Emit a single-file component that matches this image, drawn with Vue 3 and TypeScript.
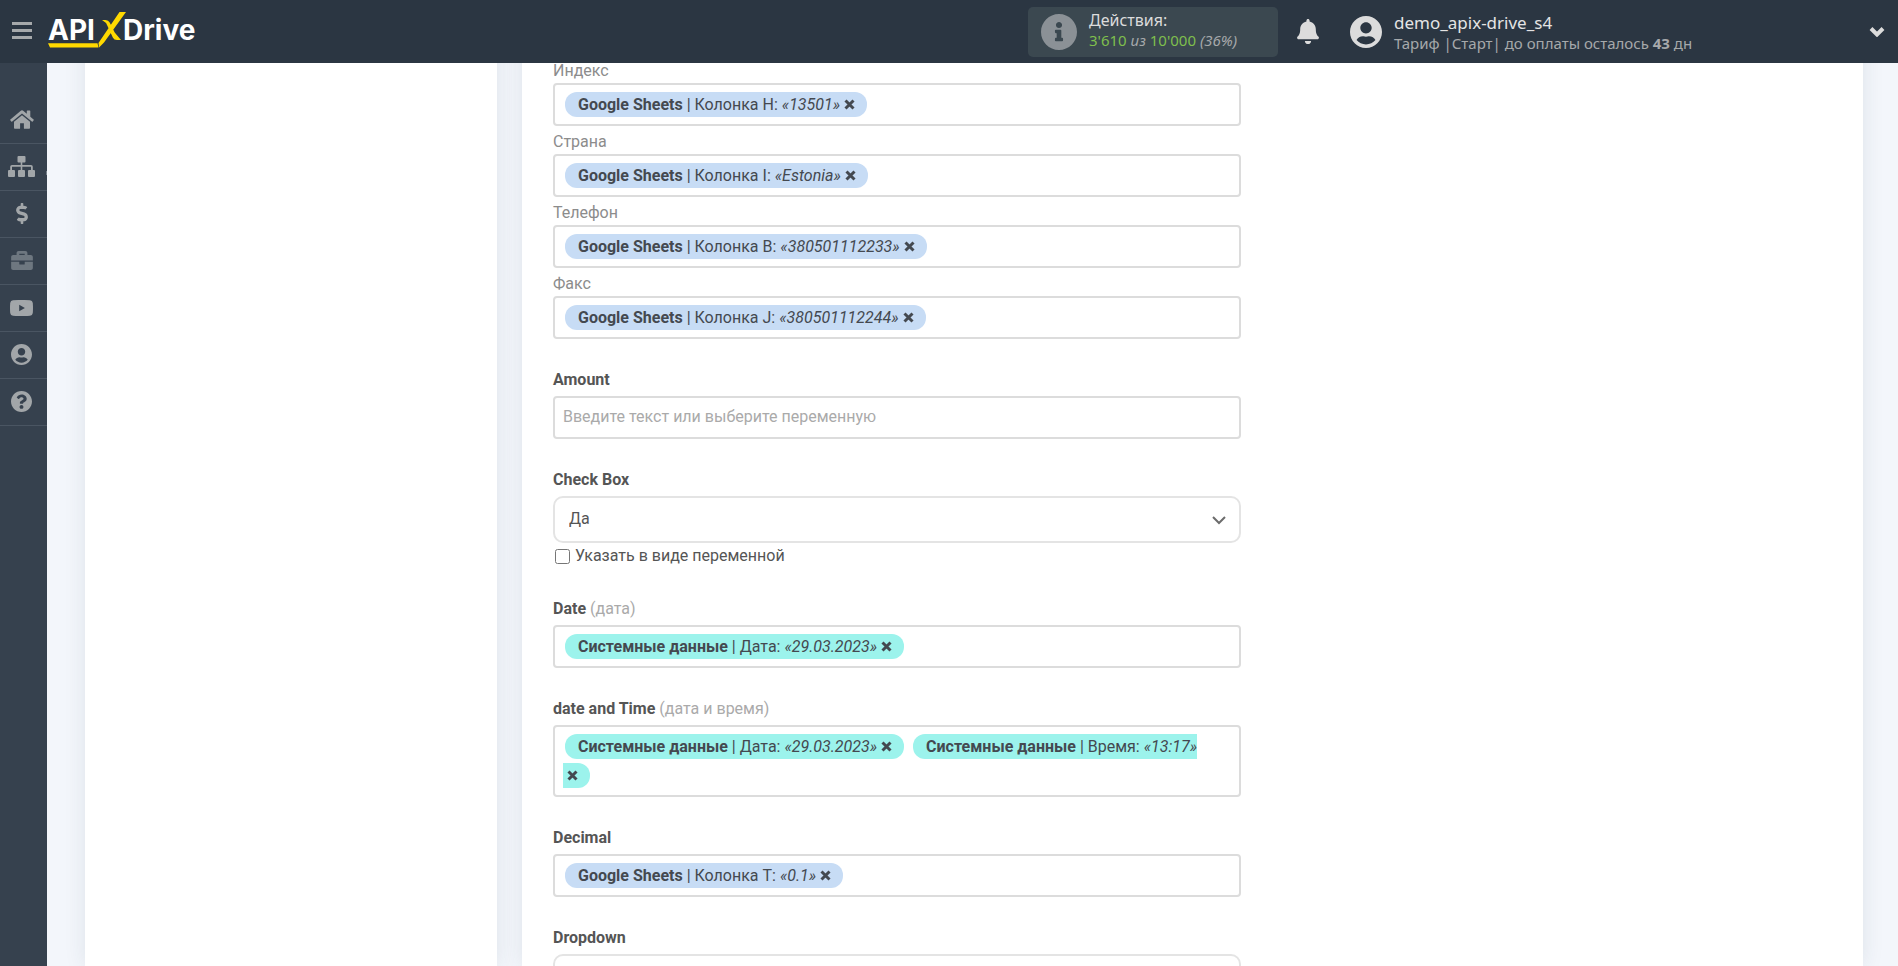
<script setup lang="ts">
import { ref } from 'vue'

interface Token {
  source: string
  column: string
  value: string
  system?: boolean
}

interface TokenField {
  id: string
  label: string
  hint?: string
  tokens: Token[]
}

interface NavItem {
  title: string
  viewBox: string
  width: number
  height: number
  path: string
  dim?: boolean
  marked?: boolean
}

const userPath =
  'M248 8C111 8 0 119 0 256s111 248 248 248 248-111 248-248S385 8 248 8zm0 96c48.6 0 88 39.4 88 88s-39.4 88-88 88-88-39.4-88-88 39.4-88 88-88zm0 344c-58.7 0-111.3-26.6-146.5-68.2 18.8-35.4 55.6-59.8 98.5-59.8 2.4 0 4.8.4 7.1 1.1 13 4.2 26.6 6.9 40.9 6.9 14.3 0 28-2.7 40.9-6.9 2.3-.7 4.7-1.1 7.1-1.1 42.9 0 79.7 24.4 98.5 59.8C359.3 421.4 306.7 448 248 448z'

const nav: NavItem[] = [
  {
    title: 'Главная',
    viewBox: '0 0 24 19',
    width: 24,
    height: 19,
    path: 'M12 5.2 4 11.8V18a.8.8 0 0 0 .8.8H9.600a.5.5 0 0 0 .5-.5V13.300h3.800v5a.5.5 0 0 0 .5.5h4.800A.8.8 0 0 0 20 18v-6.200zM23.600 9.400 20.300 6.700V1a.6.6 0 0 0-.6-.6h-2.300a.6.6 0 0 0-.6.6v2.800L13.500.9a2.400 2.400 0 0 0-3 0L.4 9.400a.6.6 0 0 0-.1.900l1 1.200a.6.6 0 0 0 .9.100L12 3.600l9.800 8a.6.6 0 0 0 .9-.1l1-1.200a.6.6 0 0 0-.1-.9z',
  },
  {
    title: 'Связи',
    viewBox: '0 0 27 21',
    width: 27,
    height: 21,
    path: 'M10.500 0h6a1 1 0 0 1 1 1v4.500a1 1 0 0 1-1 1h-2.200V9h8.700a1.800 1.800 0 0 1 1.800 1.800V14h1.200a1 1 0 0 1 1 1v5a1 1 0 0 1-1 1h-5a1 1 0 0 1-1-1v-5a1 1 0 0 1 1-1h2v-3.300h-8.700V14H16a1 1 0 0 1 1 1v5a1 1 0 0 1-1 1h-5a1 1 0 0 1-1-1v-5a1 1 0 0 1 1-1h1.700v-3.300H4V14h2a1 1 0 0 1 1 1v5a1 1 0 0 1-1 1H1a1 1 0 0 1-1-1v-5a1 1 0 0 1 1-1h1.200v-3.200A1.800 1.800 0 0 1 4 9h8.700V6.500h-2.200a1 1 0 0 1-1-1V1a1 1 0 0 1 1-1z',
    marked: true,
  },
  {
    title: 'Оплата',
    viewBox: '0 0 288 512',
    width: 12,
    height: 21,
    path: 'M209.2 233.4l-108-31.6C88.7 198.2 80 186.5 80 173.5c0-16.3 13.2-29.5 29.5-29.5h66.3c12.2 0 24.2 3.7 34.2 10.5 6.1 4.1 14.3 3.1 19.5-2l34.8-34c7.1-6.9 6.1-18.4-1.8-24.5C238 74.8 207.4 64.1 176 64V16c0-8.8-7.2-16-16-16h-32c-8.8 0-16 7.2-16 16v48h-2.500C45.8 64-5.400 118.700.5 183.600c4.200 46.100 39.400 83.600 83.800 96.600l102.500 30c12.500 3.700 21.200 15.300 21.200 28.300 0 16.300-13.200 29.500-29.500 29.500h-66.300C100 368 88 364.300 78 357.500c-6.100-4.100-14.300-3.100-19.500 2l-34.800 34c-7.100 6.900-6.100 18.400 1.800 24.500 24.500 19.200 55.100 29.900 86.500 30v48c0 8.800 7.200 16 16 16h32c8.800 0 16-7.200 16-16v-48.200c46.600-.9 90.300-28.600 105.700-72.700 21.500-61.600-14.600-124.800-72.500-141.700z',
  },
  {
    title: 'Проекты',
    viewBox: '0 32 512 448',
    width: 22,
    height: 19,
    path: 'M320 336c0 8.84-7.160 16-16 16h-96c-8.840 0-16-7.160-16-16v-48H0v144c0 25.600 22.400 48 48 48h416c25.600 0 48-22.400 48-48V288H320v48zm144-208h-80V80c0-25.600-22.400-48-48-48H176c-25.600 0-48 22.400-48 48v48H48c-25.600 0-48 22.400-48 48v80h512v-80c0-25.600-22.400-48-48-48zm-144 0H192V96h128v32z',
    dim: true,
  },
  {
    title: 'Видео',
    viewBox: '0 0 23 16',
    width: 23,
    height: 16,
    path: 'M3 .3Q11.500-.4 20 .3q2.500.2 2.800 2.700.4 5 0 10-.3 2.500-2.800 2.700-8.500.7-17 0Q.5 15.500.2 13-.2 8 .2 3 .5.500 3 .3zM9.200 4.800v6.400L14.900 8z',
  },
  { title: 'Профиль', viewBox: '0 8 496 496', width: 21, height: 21, path: userPath },
  {
    title: 'Помощь',
    viewBox: '8 8 496 496',
    width: 21,
    height: 21,
    path: 'M504 256c0 136.997-111.043 248-248 248S8 392.997 8 256C8 119.083 119.043 8 256 8s248 111.083 248 248zM262.655 90c-54.497 0-89.255 22.957-116.549 63.758-3.536 5.286-2.353 12.415 2.715 16.258l34.699 26.310c5.205 3.947 12.621 3.008 16.665-2.122 17.864-22.658 30.113-35.797 57.303-35.797 20.429 0 45.698 13.148 45.698 32.958 0 14.976-12.363 22.667-32.534 33.976C247.128 238.528 216 254.941 216 296v4c0 6.627 5.373 12 12 12h56c6.627 0 12-5.373 12-12v-1.333c0-28.462 83.186-29.647 83.186-106.667 0-58.002-60.165-102-116.531-102zM256 338c-25.365 0-46 20.635-46 46 0 25.364 20.635 46 46 46s46-20.636 46-46c0-25.365-20.635-46-46-46z',
  },
]

const sheet = (column: string, value: string): Token => ({
  source: 'Google Sheets',
  column: `Колонка ${column}`,
  value,
})
const system = (column: string, value: string): Token => ({
  source: 'Системные данные',
  column,
  value,
  system: true,
})

const contactFields = ref<TokenField[]>([
  { id: 'index', label: 'Индекс', tokens: [sheet('H', '13501')] },
  { id: 'country', label: 'Страна', tokens: [sheet('I', 'Estonia')] },
  { id: 'phone', label: 'Телефон', tokens: [sheet('B', '380501112233')] },
  { id: 'fax', label: 'Факс', tokens: [sheet('J', '380501112244')] },
])

const valueFields = ref<TokenField[]>([
  { id: 'date', label: 'Date', hint: '(дата)', tokens: [system('Дата', '29.03.2023')] },
  {
    id: 'datetime',
    label: 'date and Time',
    hint: '(дата и время)',
    tokens: [system('Дата', '29.03.2023'), system('Время', '13:17')],
  },
  { id: 'decimal', label: 'Decimal', tokens: [sheet('T', '0.1')] },
])

const amount = ref('')
const checkBox = ref('yes')
const asVariable = ref(false)
const dropdown = ref('')

function removeToken(field: TokenField, index: number) {
  field.tokens.splice(index, 1)
}
</script>

<template>
  <div class="page">
    <header class="topbar">
      <button class="icon-button menu" type="button" aria-label="Меню">
        <svg width="20" height="17" viewBox="0 0 20 17"><path d="M0 0h20v3H0zM0 7h20v3H0zM0 14h20v3H0z" /></svg>
      </button>
      <a class="logo" href="#" aria-label="APIXDrive">
        <svg width="156" height="40" viewBox="0 0 156 40">
          <text class="logo-text" x="0" y="30">API</text>
          <text class="logo-text" x="75" y="30">Drive</text>
          <path class="logo-mark" d="M0 33.300h49.500l1 4.200H2zM71.500 2H78L56 32.500l-3.500 3.500-1.500 1.500-.5-4.500 2-3zM54 10h3.500q3 0 4.200 2.500l5 10L73 30h-4q-3 0-4.200-2.500L59.500 16q-1.500-4-5.500-6z" />
        </svg>
      </a>

      <div class="usage">
        <svg width="36" height="36" viewBox="8 8 496 496">
          <path
            d="M256 8C119.043 8 8 119.083 8 256c0 136.997 111.043 248 248 248s248-111.003 248-248C504 119.083 392.957 8 256 8zm0 110c23.196 0 42 18.804 42 42s-18.804 42-42 42-42-18.804-42-42 18.804-42 42-42zm56 254c0 6.627-5.373 12-12 12h-88c-6.627 0-12-5.373-12-12v-24c0-6.627 5.373-12 12-12h12v-64h-12c-6.627 0-12-5.373-12-12v-24c0-6.627 5.373-12 12-12h64c6.627 0 12 5.373 12 12v100h12c6.627 0 12 5.373 12 12v24z"
          />
        </svg>
        <div class="usage-text">
          <div class="usage-title">Действия:</div>
          <div class="usage-count"><b>3'610</b> <i>из</i> <b>10'000</b> <i>(36%)</i></div>
        </div>
      </div>

      <button class="icon-button bell" type="button" aria-label="Уведомления">
        <svg width="22" height="25" viewBox="0 0 448 512">
          <path
            d="M224 512c35.320 0 63.970-28.650 63.970-64H160.030c0 35.350 28.650 64 63.970 64zm215.390-149.710c-19.320-20.760-55.470-51.990-55.470-154.290 0-77.700-54.480-139.900-127.940-155.160V32c0-17.670-14.320-32-31.980-32s-31.980 14.330-31.980 32v20.840C118.560 68.100 64.080 130.300 64.080 208c0 102.300-36.150 133.530-55.470 154.290-6 6.450-8.660 14.160-8.610 21.710.11 16.400 12.980 32 32.100 32h383.800c19.120 0 32-15.600 32.100-32 .05-7.550-2.610-15.270-8.610-21.710z"
          />
        </svg>
      </button>

      <button class="account" type="button">
        <svg class="avatar" width="32" height="32" viewBox="0 8 496 496"><path :d="userPath" /></svg>
        <span class="account-text">
          <span class="account-name">demo_apix-drive_s4</span>
          <span class="account-plan">Тариф |Старт| до оплаты осталось <b>43</b> дн</span>
        </span>
        <svg class="chevron" width="16" height="11" viewBox="0 0 16 11">
          <path d="M2 2.500l6 6 6-6" />
        </svg>
      </button>
    </header>

    <nav class="sidebar">
      <a
        v-for="item in nav"
        :key="item.title"
        class="nav-link"
        :class="{ dim: item.dim, marked: item.marked }"
        href="#"
        :aria-label="item.title"
      >
        <svg :width="item.width" :height="item.height" :viewBox="item.viewBox">
          <path :d="item.path" fill-rule="evenodd" />
        </svg>
      </a>
    </nav>

    <main class="content">
      <aside class="card steps"></aside>
      <section class="card editor">
        <form class="form" @submit.prevent>
          <div v-for="field in contactFields" :key="field.id" class="contact">
            <label :id="field.id + '-label'" class="contact-label">{{ field.label }}</label>
            <div class="token-box" role="textbox" tabindex="0" :aria-labelledby="field.id + '-label'">
              <template v-for="(token, i) in field.tokens" :key="i">
                <span class="token" :class="{ system: token.system }"><b>{{ token.source }}</b> | {{ token.column }}: <i>«{{ token.value }}»</i><button class="remove" type="button" aria-label="Удалить" @click="removeToken(field, i)"><svg width="11" height="11" viewBox="0 0 11 11"><path d="M1.500 1.500l8 8M9.500 1.500l-8 8" /></svg></button></span>{{ ' ' }}
              </template>
            </div>
          </div>

          <div class="group">
            <label class="group-label" for="amount">Amount</label>
            <input id="amount" v-model="amount" class="text-input" type="text" placeholder="Введите текст или выберите переменную" />
          </div>

          <div class="group">
            <label class="group-label" for="check-box">Check Box</label>
            <div class="select-wrap">
              <select id="check-box" v-model="checkBox" class="select">
                <option value="yes">Да</option>
                <option value="no">Нет</option>
              </select>
              <svg class="caret" width="14" height="9" viewBox="0 0 14 9"><path d="M1 1l6 6 6-6" /></svg>
            </div>
            <label class="check">
              <input v-model="asVariable" type="checkbox" />
              <span>Указать в виде переменной</span>
            </label>
          </div>

          <div v-for="field in valueFields" :key="field.id" class="group">
            <label :id="field.id + '-label'" class="group-label">
              {{ field.label }} <span v-if="field.hint" class="hint">{{ field.hint }}</span>
            </label>
            <div class="token-box" role="textbox" tabindex="0" :aria-labelledby="field.id + '-label'">
              <template v-for="(token, i) in field.tokens" :key="i">
                <span class="token" :class="{ system: token.system }"><b>{{ token.source }}</b> | {{ token.column }}: <i>«{{ token.value }}»</i><button class="remove" type="button" aria-label="Удалить" @click="removeToken(field, i)"><svg width="11" height="11" viewBox="0 0 11 11"><path d="M1.500 1.500l8 8M9.500 1.500l-8 8" /></svg></button></span>{{ ' ' }}
              </template>
            </div>
          </div>

          <div class="group">
            <label class="group-label" for="dropdown">Dropdown</label>
            <div class="select-wrap">
              <select id="dropdown" v-model="dropdown" class="select">
                <option value=""></option>
              </select>
              <svg class="caret" width="14" height="9" viewBox="0 0 14 9"><path d="M1 1l6 6 6-6" /></svg>
            </div>
          </div>
        </form>
      </section>
    </main>
  </div>
</template>

<style>
body {
  margin: 0;
  background: #f3f6fb;
}
</style>

<style scoped>
.page,
.page * {
  box-sizing: border-box;
}

.page {
  display: flex;
  height: 100vh;
  overflow: hidden;
  background: #f3f6fb;
  color: #555;
  font-family: Roboto, 'Noto Sans', sans-serif;
  font-size: 16px;
  line-height: 24px;
}

svg {
  display: block;
  flex: none;
}

button {
  border: 0;
  padding: 0;
  background: none;
  color: inherit;
  font: inherit;
  cursor: pointer;
}

.topbar {
  position: fixed;
  top: 0;
  left: 0;
  right: 0;
  z-index: 2;
  display: flex;
  align-items: center;
  height: 63px;
  padding: 0 13px 0 12px;
  background: #2b3642;
  font-family: 'Noto Sans', 'Open Sans', sans-serif;
}

.icon-button {
  display: flex;
  flex: none;
  fill: #dcdcdc;
}

.menu {
  padding-bottom: 3px;
  fill: #a6a9ab;
}

.logo {
  margin: 0 auto 0 16px;
  padding-bottom: 3px;
}

.logo-text {
  fill: #fff;
  font: 700 28px Inter, sans-serif;
}

.logo-mark {
  fill: #ffd900;
}

.usage {
  display: flex;
  align-items: center;
  gap: 12px;
  width: 250px;
  height: 50px;
  padding: 0 13px;
  border-radius: 5px;
  background: #3b4850;
}

.usage svg {
  fill: #8b9196;
}

.usage-text {
  padding-bottom: 3px;
}

.usage-title {
  color: #dcdcdc;
  font-size: 16px;
  line-height: 20px;
}

.usage-count {
  color: #a6a9ab;
  font-size: 15px;
  line-height: 20px;
}

.usage-count b {
  color: #7fbf4d;
  font-weight: 400;
}

.bell {
  margin-left: 19px;
}

.account {
  display: flex;
  align-items: center;
  width: 535px;
  margin-left: 31px;
  text-align: left;
}

.avatar,
.chevron {
  fill: #dcdcdc;
}

.account-text {
  display: flex;
  flex-direction: column;
  margin: 0 auto 0 12px;
  padding-top: 2px;
}

.account-name {
  color: #e4e4e4;
  font-size: 17px;
  line-height: 20px;
}

.account-plan {
  color: #a6a9ab;
  font-size: 15px;
  line-height: 20px;
}

.chevron path {
  fill: none;
  stroke: #dcdcdc;
  stroke-width: 4;
}

.sidebar {
  flex: none;
  width: 47px;
  padding-top: 97px;
  background: #36414e;
}

.nav-link {
  position: relative;
  display: flex;
  align-items: center;
  justify-content: center;
  height: 47px;
  padding: 0 4px 1px 0;
  border-bottom: 1px solid #4a5562;
  fill: #a2a6a9;
}

.nav-link.dim {
  fill: #6e7780;
}

.nav-link.marked::after {
  content: '';
  position: absolute;
  right: 0;
  bottom: 15px;
  width: 1px;
  height: 4px;
  background: #76808a;
}

.content {
  display: flex;
  flex: 1;
  gap: 25px;
  min-width: 0;
  padding: 0 35px 0 38px;
}

.card {
  background: #fff;
  box-shadow: 0 0 20px rgba(40, 55, 75, 0.1);
}

.steps {
  flex: 0 0 412px;
}

.editor {
  flex: 1;
  min-width: 0;
  padding: 55px 31px 0;
}

.form {
  max-width: 688px;
}

.contact-label {
  display: block;
  padding-top: 4px;
  color: #8c8c8c;
}

.token-box {
  padding: 5px 12px 5px 8px;
  border: 2px solid #dcdcdc;
  border-radius: 4px;
  color: #444950;
  line-height: 29px;
}

.token {
  margin: 0 3px 0 2px;
  padding: 3px 12px 3px 13px;
  border-radius: 12px;
  background: #c7dcf5;
}

.token.system {
  background: #9cf3ec;
}

.token b,
.group-label {
  font-weight: 700;
}

.remove {
  display: inline-block;
  margin-left: 4px;
  line-height: 11px;
}

.remove path {
  fill: none;
  stroke: #444950;
  stroke-width: 3;
}

.group {
  padding-top: 29px;
}

.group-label {
  display: block;
  margin-bottom: 4px;
}

.hint {
  color: #aaa;
  font-weight: 400;
}

.text-input {
  display: block;
  width: 100%;
  height: 43px;
  padding: 0 8px 3px;
  border: 2px solid #dcdcdc;
  border-radius: 4px;
  color: #555;
  font: inherit;
}

.text-input::placeholder {
  color: #aaa;
  opacity: 1;
}

.select-wrap {
  position: relative;
}

.select {
  display: block;
  width: 100%;
  height: 47px;
  padding: 0 40px 1px 14px;
  appearance: none;
  border: 2px solid #e4e4e4;
  border-radius: 10px;
  background: #fff;
  color: #555;
  font: inherit;
}

.caret {
  position: absolute;
  top: 20px;
  right: 15px;
  pointer-events: none;
}

.caret path {
  fill: none;
  stroke: #6c6c6c;
  stroke-width: 2;
}

.check {
  display: flex;
  align-items: center;
  gap: 5px;
  padding-top: 1px;
}

.check input {
  width: 15px;
  height: 15px;
  margin: 0 0 0 2px;
}
</style>
